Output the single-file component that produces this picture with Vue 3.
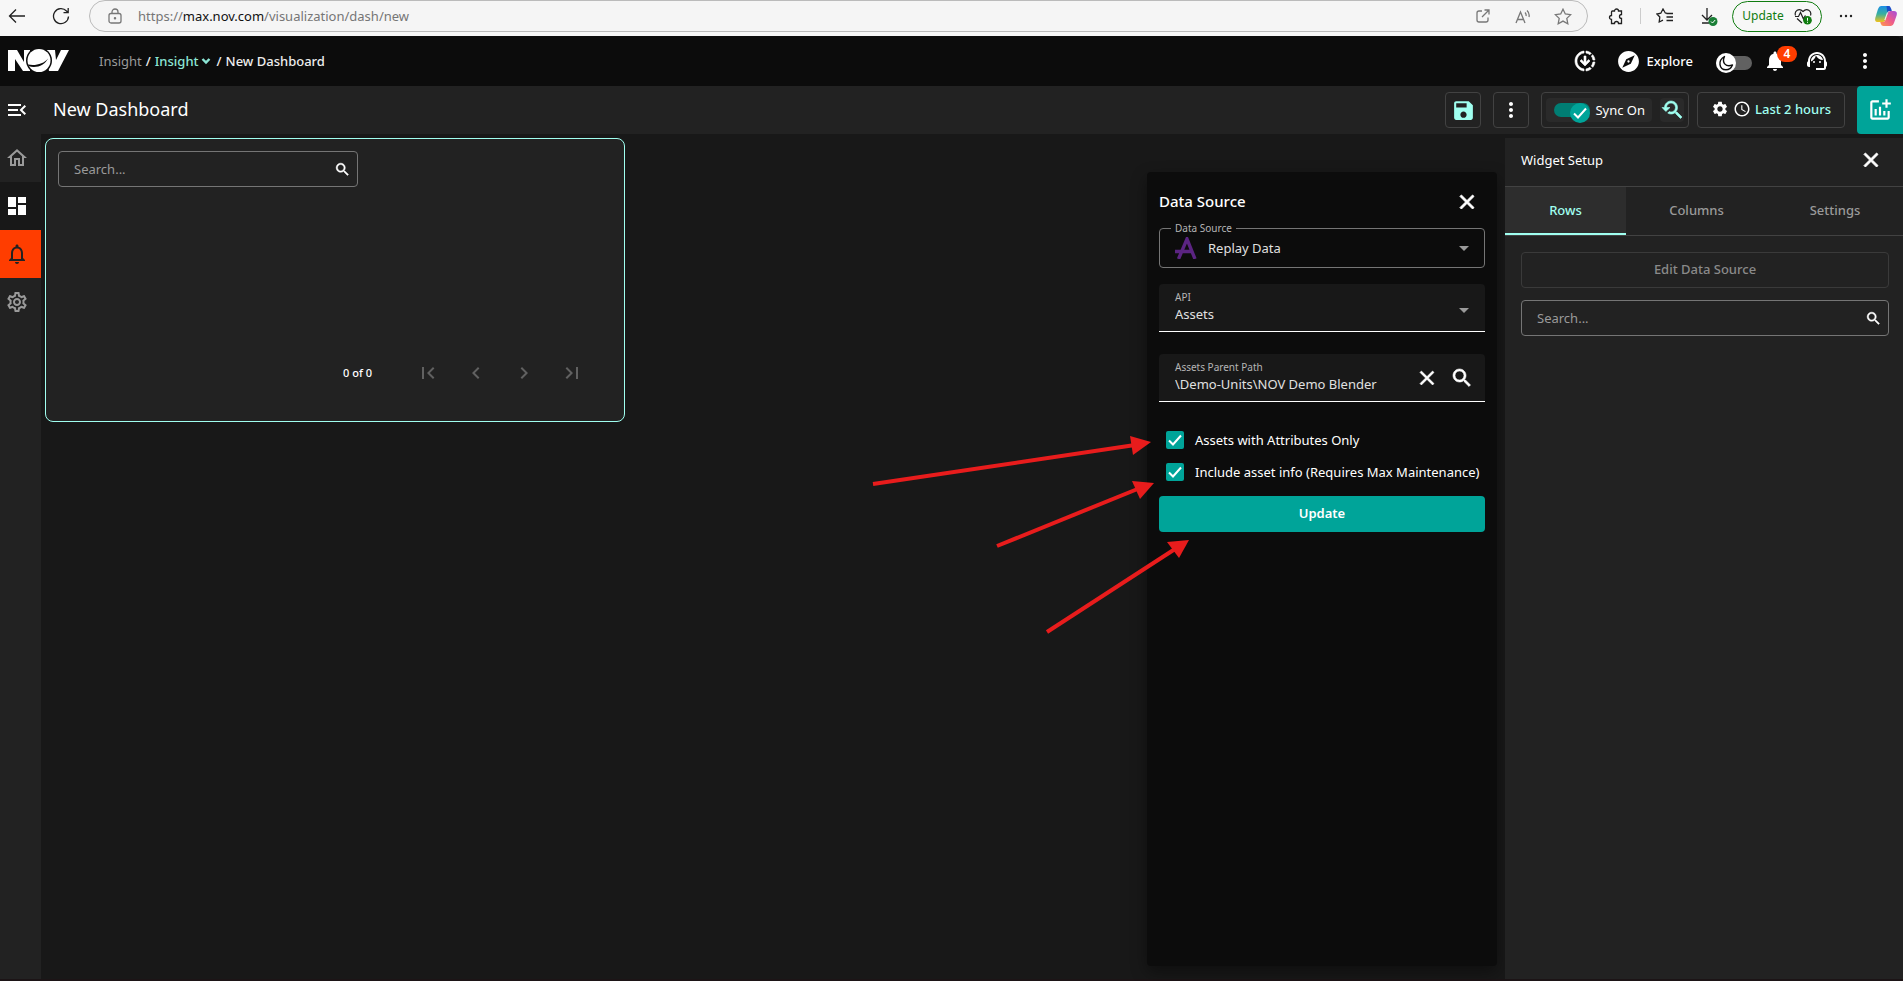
<script setup>
import { ref } from 'vue'

const paths = {
  menuOpen: 'M3 18h13v-2H3v2zM3 13h10v-2H3v2zm0-7v2h13V6H3zm18 9.59L17.42 12 21 8.41 19.59 7l-5 5 5 5L21 15.59z',
  home: 'M12 5.69l5 4.5V18h-2v-6H9v6H7v-7.81l5-4.5M12 3L2 12h3v8h6v-6h2v6h6v-8h3L12 3z',
  dashboard: 'M3 13h8V3H3v10zm0 8h8v-6H3v6zm10 0h8V11h-8v10zm0-18v6h8V3h-8z',
  bellOutline: 'M12 22c1.1 0 2-.9 2-2h-4c0 1.1.9 2 2 2zm6-6v-5c0-3.07-1.63-5.64-4.5-6.32V4c0-.83-.67-1.5-1.5-1.5s-1.5.67-1.5 1.5v.68C7.64 5.36 6 7.92 6 11v5l-2 2v1h16v-1l-2-2zm-2 1H8v-6c0-2.48 1.51-4.5 4-4.5s4 2.02 4 4.5v6z',
  bell: 'M12 22c1.1 0 2-.9 2-2h-4c0 1.1.89 2 2 2zm6-6v-5c0-3.07-1.64-5.64-4.5-6.32V4c0-.83-.67-1.5-1.5-1.5s-1.5.67-1.5 1.5v.68C7.63 5.36 6 7.92 6 11v5l-2 2v1h16v-1l-2-2z',
  gearOutline: 'M19.43 12.98c.04-.32.07-.64.07-.98 0-.34-.03-.66-.07-.98l2.11-1.65c.19-.15.24-.42.12-.64l-2-3.46c-.09-.16-.26-.25-.44-.25-.06 0-.12.01-.17.03l-2.49 1c-.52-.4-1.08-.73-1.69-.98l-.38-2.65C14.46 2.18 14.25 2 14 2h-4c-.25 0-.46.18-.49.42l-.38 2.65c-.61.25-1.17.59-1.69.98l-2.49-1c-.06-.02-.12-.03-.18-.03-.17 0-.34.09-.43.25l-2 3.46c-.13.22-.07.49.12.64l2.11 1.65c-.04.32-.07.65-.07.98 0 .33.03.66.07.98l-2.11 1.65c-.19.15-.24.42-.12.64l2 3.46c.09.16.26.25.44.25.06 0 .12-.01.17-.03l2.49-1c.52.4 1.08.73 1.69.98l.38 2.65c.03.24.24.42.49.42h4c.25 0 .46-.18.49-.42l.38-2.65c.61-.25 1.17-.59 1.69-.98l2.49 1c.06.02.12.03.18.03.17 0 .34-.09.43-.25l2-3.46c.12-.22.07-.49-.12-.64l-2.11-1.65zm-1.98-1.71c.04.31.05.52.05.73 0 .21-.02.43-.05.73l-.14 1.13.89.7 1.08.84-.7 1.21-1.27-.51-1.04-.42-.9.68c-.43.32-.84.56-1.25.73l-1.06.43-.16 1.13-.2 1.35h-1.4l-.19-1.35-.16-1.13-1.06-.43c-.43-.18-.83-.41-1.23-.71l-.91-.7-1.06.43-1.27.51-.7-1.21 1.08-.84.89-.7-.14-1.13c-.03-.31-.05-.54-.05-.74s.02-.43.05-.73l.14-1.13-.89-.7-1.08-.84.7-1.21 1.27.51 1.04.42.9-.68c.43-.32.84-.56 1.25-.73l1.06-.43.16-1.13.2-1.35h1.39l.19 1.35.16 1.13 1.06.43c.43.18.83.41 1.23.71l.91.7 1.06-.43 1.27-.51.7 1.21-1.07.85-.89.7.14 1.13zM12 8c-2.21 0-4 1.79-4 4s1.79 4 4 4 4-1.79 4-4-1.79-4-4-4zm0 6c-1.1 0-2-.9-2-2s.9-2 2-2 2 .9 2 2-.9 2-2 2z',
  gear: 'M19.14 12.94c.04-.3.06-.61.06-.94 0-.32-.02-.64-.07-.94l2.03-1.58c.18-.14.23-.41.12-.61l-1.92-3.32c-.12-.22-.37-.29-.59-.22l-2.39.96c-.5-.38-1.03-.7-1.62-.94l-.36-2.54c-.04-.24-.24-.41-.48-.41h-3.84c-.24 0-.43.17-.47.41l-.36 2.54c-.59.24-1.13.57-1.62.94l-2.39-.96c-.22-.08-.47 0-.59.22L2.74 8.87c-.12.21-.08.47.12.61l2.03 1.58c-.05.3-.09.63-.09.94s.02.64.07.94l-2.03 1.58c-.18.14-.23.41-.12.61l1.92 3.32c.12.22.37.29.59.22l2.39-.96c.5.38 1.03.7 1.62.94l.36 2.54c.05.24.24.41.48.41h3.84c.24 0 .44-.17.47-.41l.36-2.54c.59-.24 1.13-.56 1.62-.94l2.39.96c.22.08.47 0 .59-.22l1.92-3.32c.12-.22.07-.47-.12-.61l-2.01-1.58zM12 15.6c-1.98 0-3.6-1.62-3.6-3.6s1.62-3.6 3.6-3.6 3.6 1.62 3.6 3.6-1.62 3.6-3.6 3.6z',
  save: 'M17 3H5c-1.11 0-2 .9-2 2v14c0 1.1.89 2 2 2h14c1.1 0 2-.9 2-2V7l-4-4zm-5 16c-1.66 0-3-1.34-3-3s1.34-3 3-3 3 1.34 3 3-1.34 3-3 3zm3-10H5V5h10v4z',
  more: 'M12 8c1.1 0 2-.9 2-2s-.9-2-2-2-2 .9-2 2 .9 2 2 2zm0 2c-1.1 0-2 .9-2 2s.9 2 2 2 2-.9 2-2-.9-2-2-2zm0 6c-1.1 0-2 .9-2 2s.9 2 2 2 2-.9 2-2-.9-2-2-2z',
  search: 'M15.5 14h-.79l-.28-.27C15.41 12.59 16 11.11 16 9.5 16 5.91 13.09 3 9.5 3S3 5.91 3 9.5 5.91 16 9.5 16c1.61 0 3.09-.59 4.23-1.57l.27.28v.79l5 4.99L20.49 19l-4.99-5zm-6 0C7.01 14 5 11.99 5 9.5S7.01 5 9.5 5 14 7.01 14 9.5 11.99 14 9.5 14z',
  close: 'M19 6.41L17.59 5 12 10.59 6.41 5 5 6.41 10.59 12 5 17.59 6.41 19 12 13.41 17.59 19 19 17.59 13.41 12z',
  explore: 'M12 10.9c-.61 0-1.1.49-1.1 1.1s.49 1.1 1.1 1.1c.61 0 1.1-.49 1.1-1.1s-.49-1.1-1.1-1.1zM12 2C6.48 2 2 6.48 2 12s4.48 10 10 10 10-4.48 10-10S17.52 2 12 2zm2.19 12.19L6 18l3.81-8.19L18 6l-3.81 8.19z',
  support: 'M21 12.22C21 6.73 16.74 3 12 3c-4.69 0-9 3.65-9 9.28-.6.34-1 .98-1 1.72v2c0 1.1.9 2 2 2h1v-6.1c0-3.87 3.13-7 7-7s7 3.13 7 7V19h-8v2h8c1.1 0 2-.9 2-2v-1.22c.59-.31 1-.92 1-1.64v-2.3c0-.7-.41-1.31-1-1.62zM9 12a1 1 0 1 0 0 2 1 1 0 0 0 0-2zM15 12a1 1 0 1 0 0 2 1 1 0 0 0 0-2zM18 11.03C17.52 8.18 15.04 6 12.05 6c-3.03 0-6.29 2.51-6.03 6.45 2.47-1.01 4.33-3.21 4.86-5.89 1.31 2.63 4 4.44 7.12 4.47z',
  clock: 'M11.99 2C6.47 2 2 6.48 2 12s4.47 10 9.99 10C17.52 22 22 17.52 22 12S17.52 2 11.99 2zM12 20c-4.42 0-8-3.58-8-8s3.58-8 8-8 8 3.58 8 8-3.58 8-8 8zm.5-13H11v6l5.25 3.15.75-1.23-4.5-2.67z',
  downloading: 'M18.32 4.26C16.84 3.05 15.01 2.25 13 2.05v2.02c1.46.18 2.79.76 3.9 1.62l1.42-1.43zM19.93 11h2.02c-.2-2.01-1-3.84-2.21-5.32L18.31 7.1c.86 1.11 1.44 2.44 1.62 3.9zm-1.62 5.9l1.43 1.43c1.21-1.48 2.01-3.32 2.21-5.32h-2.02c-.18 1.45-.76 2.78-1.62 3.89zM13 19.93v2.02c2.01-.2 3.84-1 5.32-2.21l-1.43-1.43c-1.1.86-2.43 1.44-3.89 1.62zM15.59 10.59L13 13.17V7h-2v6.17l-2.59-2.59L7 12l5 5 5-5-1.41-1.41zM11 19.93v2.02c-5.05-.5-9-4.76-9-9.95s3.95-9.45 9-9.95v2.02C7.05 4.56 4 7.92 4 12s3.05 7.44 7 7.93z',
  first: 'M18.41 16.59L13.82 12l4.59-4.59L17 6l-6 6 6 6zM6 6h2v12H6z',
  prev: 'M15.41 7.41L14 6l-6 6 6 6 1.41-1.41L10.83 12z',
  next: 'M10 6L8.59 7.41 13.17 12l-4.58 4.59L10 18l6-6z',
  last: 'M5.59 7.41L10.18 12l-4.59 4.59L7 18l6-6-6-6zM16 6h2v12h-2z',
  addChart: 'M22 5v2h-3v3h-2V7h-3V5h3V2h2v3h3zm-3 14H5V5h6V3H5c-1.1 0-2 .9-2 2v14c0 1.1.9 2 2 2h14c1.1 0 2-.9 2-2v-6h-2v6zm-4-6v4h2v-4h-2zm-4 4h2V9h-2v8zm-2 0v-6H7v6h2z',
  resetZoom: 'M17.01 14h-.8l-.27-.27c.98-1.14 1.57-2.61 1.57-4.23 0-3.59-2.91-6.5-6.5-6.5s-6.5 3-6.5 6.5H2l3.84 4 4.16-4H6.51C6.51 7 8.53 5 11.01 5s4.5 2.01 4.5 4.5c0 2.48-2.02 4.5-4.5 4.5-.65 0-1.26-.14-1.82-.38L7.71 15.1c.97.57 2.09.9 3.3.9 1.61 0 3.08-.59 4.22-1.57l.27.27v.79l5.01 4.99L22 19l-4.99-5z',
  expand: 'M16.59 8.59L12 13.17 7.41 8.59 6 10l6 6 6-6z'
}

const nav = [
  { id: 'home', label: 'Home', icon: paths.home },
  { id: 'dashboards', label: 'Dashboards', icon: paths.dashboard },
  { id: 'alarms', label: 'Alarms', icon: paths.bellOutline },
  { id: 'settings', label: 'Settings', icon: paths.gearOutline }
]
const pager = [
  { label: 'First page', icon: paths.first },
  { label: 'Previous page', icon: paths.prev },
  { label: 'Next page', icon: paths.next },
  { label: 'Last page', icon: paths.last }
]
const tabs = ['Rows', 'Columns', 'Settings']
const activeTab = ref('Rows')
const widgetSearch = ref('')
const rowSearch = ref('')
const source = ref('Replay Data')
const api = ref('Assets')
const parentPath = ref('\\Demo-Units\\NOV Demo Blender')
const sync = ref(true)
const dark = ref(true)
const options = ref([
  { id: 'attrs', label: 'Assets with Attributes Only', on: true },
  { id: 'info', label: 'Include asset info (Requires Max Maintenance)', on: true }
])
</script>

<template>
  <div class="page">
    <div class="browser">
      <button class="bbtn" aria-label="Back">
        <svg width="18" height="16" viewBox="0 0 18 16" class="line"><path d="M17 8H1.500M8 1.500L1.500 8L8 14.500" /></svg>
      </button>
      <button class="bbtn" aria-label="Refresh">
        <svg width="18" height="18" viewBox="0 0 18 18" class="line"><path d="M16.500 9.500A7.500 7.500 0 1 1 14.500 4L16 5.500M16.200 1V5.700H11.500" /></svg>
      </button>
      <div class="address">
        <svg width="14" height="16" viewBox="0 0 14 16" class="line grey"><rect x="1" y="5.500" width="12" height="9.500" rx="2" /><path d="M4 5.500V4a3 3 0 0 1 6 0V5.500" /><circle cx="7" cy="10.300" r=".6" /></svg>
        <span class="url">https://<b>max.nov.com</b>/visualization/dash/new</span>
        <div class="address-tools">
          <button class="bbtn" aria-label="Open in app">
            <svg width="14" height="14" viewBox="0 0 14 14" class="line grey"><path d="M6 2H3a2 2 0 0 0-2 2v7a2 2 0 0 0 2 2h7a2 2 0 0 0 2-2V8.500M8.500 1H13V5.500M13 1L6 8" /></svg>
          </button>
          <button class="bbtn" aria-label="Read aloud">
            <svg width="16" height="15" viewBox="0 0 16 15" class="line grey"><path d="M1 14L5.500 3L10 14M2.600 10.500H8.500M10 3.500Q11.500 5 11 7M12 1.500Q14.800 4 14 8" /></svg>
          </button>
          <button class="bbtn" aria-label="Add to favorites">
            <svg width="18" height="17" viewBox="0 0 18 17" class="line grey"><path d="M9 1.200L11.300 6L16.700 6.700L12.800 10.400L13.800 15.700L9 13.100L4.200 15.700L5.200 10.400L1.300 6.700L6.700 6Z" /></svg>
          </button>
        </div>
      </div>
      <div class="browser-tools">
        <button class="bbtn" aria-label="Extensions">
          <svg width="16" height="17" viewBox="0 0 16 17" class="line"><path d="M4.500 3H6.500A2 2 0 0 1 10.500 3H13.500V6.500A2 2 0 0 0 13.500 10.500V15.500H10.500A2 2 0 0 0 6.500 15.500H3.500V11.500A2 2 0 1 1 3.500 7.500V4A1 1 0 0 1 4.500 3Z" /></svg>
        </button>
        <i class="rule"></i>
        <button class="bbtn" aria-label="Favorites">
          <svg width="18" height="16" viewBox="0 0 18 16" class="line"><path d="M11 5.300L9.300 5L7 1L4.800 5.200L1 6L3.800 9L3.200 14L7 12.200M10.500 5.500H17M10.500 9H17M10.500 12.500H17" /></svg>
        </button>
        <button class="bbtn" aria-label="Downloads">
          <svg width="18" height="19" viewBox="0 0 18 19"><path d="M7 1V13M2 8L7 13L12 8M2 16H9" fill="none" stroke="#222" stroke-width="1.300" /><circle cx="13" cy="14.500" r="4.500" fill="#1a7f37" /><path d="M11 14.500L12.500 16L15.200 13" fill="none" stroke="#fff" /></svg>
        </button>
        <button class="update-pill">Update
          <svg width="18" height="17" viewBox="0 0 18 17"><path d="M1.500 7.500C0 3 5 -.5 9 3.500C13 -.5 18 3 16.500 7.500M3 10.500L8 15M1 8.500H4.500L6.500 4.500L9.500 11L11 8H12" fill="none" stroke="#222" stroke-width="1.200" /><circle cx="13.500" cy="12.300" r="4.300" fill="#107c10" /><path d="M13.500 9.800V12.800M13.500 13.800V14.800" stroke="#fff" /></svg>
        </button>
        <button class="bbtn" aria-label="Browser menu">
          <svg width="14" height="4" viewBox="0 0 14 4" fill="#222"><circle cx="2" cy="2" r="1.200" /><circle cx="7" cy="2" r="1.200" /><circle cx="12" cy="2" r="1.200" /></svg>
        </button>
        <button class="bbtn" aria-label="Copilot">
          <svg width="22" height="20" viewBox="0 0 22 20">
            <defs>
              <linearGradient id="cpA" x1="0" y1="0" x2="0" y2="1"><stop offset="0" stop-color="#1b8fe6" /><stop offset=".5" stop-color="#38b0a0" /><stop offset="1" stop-color="#f2c21a" /></linearGradient>
              <linearGradient id="cpB" x1="1" y1="0" x2="0" y2="1"><stop offset="0" stop-color="#a44ddb" /><stop offset=".5" stop-color="#ee5a8a" /><stop offset="1" stop-color="#ff9a4a" /></linearGradient>
            </defs>
            <path d="M6 0H15L13.500 5L10.500 14Q9.800 16 8 16H3Q-.8 16 .4 11.500L3 3Q4 0 6 0Z" fill="url(#cpA)" />
            <path d="M11.500 0H13.500Q15.500 0 16.300 3L16.800 5H14Q12.800 5 12.300 6.500Z" fill="#1b4ec9" />
            <path d="M16 20H8.500Q6.500 20 5.700 17.500L5.200 16H8Q9.800 16 10.500 14L13 6.500Q13.600 5 15.500 5H19Q22.800 5 21.600 9.500L19 17Q18 20 16 20Z" fill="url(#cpB)" />
            <path d="M12 6.500H13L10.300 14H9.300Z" fill="#f7f7f7" />
          </svg>
        </button>
      </div>
    </div>

    <header class="topbar">
      <a href="#" class="logo" aria-label="NOV">
        <svg width="62" height="24" viewBox="0 0 62 24">
          <path d="M0 1H9L16 13V1H22V22H15L7 10V22H0Z" fill="#fff" />
          <path d="M37 1H47L48 11L53 1H61L50 22H41Z" fill="#fff" />
          <circle cx="31" cy="11.500" r="13" fill="#0c0c0c" />
          <circle cx="31" cy="11.500" r="11.500" fill="#fff" />
          <path d="M20 15.500C27 17 36 15 40 9.500C37 16 28 20 20.500 17Z" fill="#0c0c0c" />
        </svg>
      </a>
      <nav class="crumbs">
        <a href="#" class="dim">Insight</a><span>/</span>
        <button class="crumb-drop">Insight<svg width="14" height="14" viewBox="0 0 24 24"><path :d="paths.expand" stroke="currentColor" stroke-width="2" /></svg></button>
        <span>/</span><span>New Dashboard</span>
      </nav>
      <div class="top-tools">
        <button class="ibtn" aria-label="Downloads"><svg width="24" height="24" viewBox="0 0 24 24"><path :d="paths.downloading" stroke="currentColor" stroke-width=".6" /></svg></button>
        <button class="explore"><svg width="25" height="25" viewBox="0 0 24 24"><path :d="paths.explore" /></svg>Explore</button>
        <label class="switch theme">
          <input v-model="dark" type="checkbox" aria-label="Dark theme" />
          <span class="knob"><svg width="16" height="16" viewBox="0 0 16 16"><path d="M6.500 1.500C3.500 8 8 12.500 14.500 10C13 13.500 10.500 14.800 8 14.800C1 14.800 -.5 5.500 6.500 1.500Z" fill="#fff" stroke="#0c0c0c" stroke-width="1.400" stroke-linejoin="round" /></svg></span>
        </label>
        <button class="ibtn bell" aria-label="Notifications"><svg width="24" height="24" viewBox="0 0 24 24"><path :d="paths.bell" /></svg><span class="badge">4</span></button>
        <button class="ibtn" aria-label="Support"><svg width="24" height="24" viewBox="0 0 24 24"><path :d="paths.support" /></svg></button>
        <button class="ibtn" aria-label="More"><svg width="24" height="24" viewBox="0 0 24 24"><path :d="paths.more" /></svg></button>
      </div>
    </header>

    <div class="toolbar">
      <button class="ibtn" aria-label="Expand menu"><svg width="24" height="24" viewBox="0 0 24 24"><path :d="paths.menuOpen" /></svg></button>
      <h1>New Dashboard</h1>
      <div class="actions">
        <button class="obtn mint" aria-label="Save"><svg width="25" height="25" viewBox="0 0 24 24"><path :d="paths.save" /></svg></button>
        <button class="obtn" aria-label="Dashboard options"><svg width="24" height="24" viewBox="0 0 24 24"><path :d="paths.more" /></svg></button>
        <div class="group">
          <label class="switch sync">
            <input v-model="sync" type="checkbox" />
            <span class="knob"><svg width="16" height="16" viewBox="0 0 16 16"><path d="M2 8.500L6 12.500L14 3.500" fill="none" stroke="#fff" stroke-width="2" /></svg></span>
            Sync On
          </label>
          <button class="reset mint" aria-label="Reset zoom"><svg width="24" height="24" viewBox="0 0 24 24"><path :d="paths.resetZoom" stroke="currentColor" stroke-width=".6" /></svg></button>
        </div>
        <button class="range">
          <svg width="18" height="18" viewBox="0 0 24 24"><path :d="paths.gear" /></svg>
          <svg width="18" height="18" viewBox="0 0 24 24"><path :d="paths.clock" /></svg>
          <span>Last 2 hours</span>
        </button>
      </div>
      <button class="add" aria-label="Add widget"><svg width="26" height="26" viewBox="0 0 24 24"><path :d="paths.addChart" /></svg></button>
    </div>

    <div class="body">
      <nav class="side">
        <a v-for="n in nav" :key="n.id" href="#" :class="n.id" :aria-label="n.label"><svg width="24" height="24" viewBox="0 0 24 24"><path :d="n.icon" /></svg></a>
      </nav>

      <main class="canvas">
        <section class="widget">
          <label class="search">
            <input v-model="widgetSearch" type="text" placeholder="Search..." aria-label="Search widget" />
            <svg width="17" height="17" viewBox="0 0 24 24"><path :d="paths.search" stroke="currentColor" stroke-width=".6" /></svg>
          </label>
          <div class="pager">
            <span>0 of 0</span>
            <button v-for="p in pager" :key="p.label" disabled :aria-label="p.label"><svg width="24" height="24" viewBox="0 0 24 24"><path :d="p.icon" /></svg></button>
          </div>
        </section>
      </main>

      <section class="source">
        <div class="source-head">
          <h2>Data Source</h2>
          <button class="ibtn" aria-label="Close data source"><svg width="24" height="24" viewBox="0 0 24 24"><path :d="paths.close" stroke="currentColor" /></svg></button>
        </div>
        <div class="field outlined">
          <label for="src">Data Source</label>
          <svg class="mark" width="22" height="22" viewBox="0 0 22 22"><path d="M3.500 22L12 2L20 22M0 14.500H16" fill="none" stroke="#5b2482" stroke-width="3.400" /></svg>
          <select id="src" v-model="source"><option>Replay Data</option></select>
          <i class="caret"></i>
        </div>
        <div class="field filled">
          <label for="api">API</label>
          <select id="api" v-model="api"><option>Assets</option></select>
          <i class="caret"></i>
        </div>
        <div class="field filled">
          <label for="path">Assets Parent Path</label>
          <input id="path" v-model="parentPath" type="text" />
          <div class="field-tools">
            <button class="ibtn" aria-label="Clear path"><svg width="24" height="24" viewBox="0 0 24 24"><path :d="paths.close" stroke="currentColor" stroke-width=".6" /></svg></button>
            <button class="ibtn" aria-label="Find path"><svg width="24" height="24" viewBox="0 0 24 24"><path :d="paths.search" stroke="currentColor" stroke-width=".6" /></svg></button>
          </div>
        </div>
        <div class="checks">
          <label v-for="o in options" :key="o.id">
            <span class="tick">
              <input v-model="o.on" type="checkbox" />
              <svg width="18" height="18" viewBox="0 0 18 18"><path d="M3 9.500L7 13.500L15 4.500" fill="none" stroke="#fff" stroke-width="2" /></svg>
            </span>
            {{ o.label }}
          </label>
        </div>
        <button class="primary">Update</button>
      </section>

      <aside class="setup">
        <div class="setup-head">
          <h2>Widget Setup</h2>
          <button class="ibtn" aria-label="Close widget setup"><svg width="24" height="24" viewBox="0 0 24 24"><path :d="paths.close" stroke="currentColor" /></svg></button>
        </div>
        <div class="tabs" role="tablist">
          <button v-for="t in tabs" :key="t" role="tab" :aria-selected="t === activeTab" :class="{ active: t === activeTab }" @click="activeTab = t">{{ t }}</button>
        </div>
        <div class="setup-body">
          <button class="edit" disabled>Edit Data Source</button>
          <label class="search">
            <input v-model="rowSearch" type="text" placeholder="Search..." aria-label="Search rows" />
            <svg width="17" height="17" viewBox="0 0 24 24"><path :d="paths.search" stroke="currentColor" stroke-width=".6" /></svg>
          </label>
        </div>
      </aside>

      <svg class="arrows" width="330" height="210" viewBox="870 430 330 210">
        <g stroke="#e81c1c" stroke-width="4">
          <path d="M873 484L1135 445" /><path d="M997 546L1140 488" /><path d="M1047 632L1175 549" />
        </g>
        <g fill="#e81c1c">
          <path d="M1151 442L1130 436L1133 455Z" /><path d="M1154 483L1132 481L1140 499Z" /><path d="M1189 540L1167 542L1179 558Z" />
        </g>
      </svg>
    </div>
  </div>
</template>

<style>
body { margin: 0; background: #181818; }
</style>

<style scoped>
.page { min-height: 100vh; display: flex; flex-direction: column; font: 500 13px/20px "Noto Sans", "Open Sans", sans-serif; color: #fff; background: #181818; }
.page, .page *, .page *::before { box-sizing: border-box; }
button, input, select { font: inherit; color: inherit; background: none; border: 0; margin: 0; padding: 0; }
button { display: flex; align-items: center; justify-content: center; }
input, select { appearance: none; outline: 0; min-width: 0; opacity: 1; }
a { color: inherit; text-decoration: none; }
h1, h2 { margin: 0; }
svg { display: block; flex: none; }
.ibtn svg, .obtn svg, .side svg, .add svg, .range svg, .reset svg, .explore svg, .search svg, .pager svg, .crumb-drop svg { fill: currentColor; }
.ibtn { width: 24px; height: 24px; }
.mint { color: #a0fff0; }

.browser { height: 36px; display: flex; align-items: flex-start; background: #f7f7f7; color: #222; }
.bbtn { height: 32px; width: 44px; flex: none; }
.browser > .bbtn { width: 34px; }
.browser > .bbtn + .bbtn { margin-left: 10px; margin-right: 11px; }
.line { fill: none; stroke: #222; stroke-width: 1.3; }
.line.grey { stroke: #777; }
.address { flex: 1; height: 32px; display: flex; align-items: center; padding: 0 4px 0 18px; border: 1px solid #bbb; border-radius: 16px; background: #f5f5f5; }
.url { margin-left: 16px; color: #767676; font-weight: 400; font-size: 13px; }
.url b { font-weight: 400; color: #111; }
.address-tools { margin-left: auto; display: flex; }
.address-tools .bbtn { width: 40px; }
.browser-tools { display: flex; align-items: center; height: 32px; padding-left: 6px; }
.rule { width: 1px; height: 16px; margin: 0 2px; background: #ccc; }
.update-pill { width: 90px; height: 31px; margin: 0 2px 0 1px; gap: 10px; border: 1px solid #107c10; border-radius: 16px; color: #107c10; font-weight: 400; font-size: 12px; }
.browser-tools .bbtn:last-child { width: 35px; }

.topbar { height: 50px; display: flex; align-items: center; padding: 0 26px 0 8px; border-top-right-radius: 8px; background: #0c0c0c; }
.crumbs { display: flex; gap: 4px; margin-left: 29px; color: #eee; }
.dim { color: #9a9a9a; font-weight: 400; }
.crumb-drop { color: #8ce6d6; }
.top-tools { margin-left: auto; display: flex; align-items: center; }
.explore { margin-left: 19px; gap: 5px; }
.switch { display: flex; align-items: center; position: relative; }
.switch input { border-radius: 8px; }
.knob { position: absolute; display: grid; place-items: center; width: 20px; height: 20px; border-radius: 10px; background: #fff; }
.theme { margin: 4px 11px 0 23px; }
.theme input { width: 36px; height: 14px; background: #616161; }
.theme .knob { left: 0; }
.bell { position: relative; margin-right: 18px; }
.bell + .ibtn { margin-right: 24px; }
.badge { position: absolute; left: 14px; top: -3px; width: 20px; height: 16px; border-radius: 8px; background: #ff3d00; font: 600 12px/16px "Noto Sans", sans-serif; text-align: center; }

.toolbar { height: 48px; display: flex; align-items: center; background: #222; padding-left: 5px; }
.toolbar h1 { margin-left: 24px; padding-bottom: 2px; font-size: 18px; line-height: 24px; font-weight: 400; }
.actions { margin-left: auto; display: flex; gap: 12px; }
.obtn { width: 36px; height: 36px; border: 1px solid #424242; border-radius: 4px; }
.group { display: flex; align-items: center; gap: 8px; height: 36px; padding: 0 4px; border: 1px solid #424242; border-radius: 4px; }
.sync { height: 24px; padding: 0 7px 0 8px; gap: 5px; border-radius: 4px; background: #2a2a2a; font-weight: 400; }
.sync input { width: 36px; height: 14px; background: #007d73; }
.sync .knob { left: 24px; top: 5px; background: #00a499; }
.reset { width: 24px; height: 24px; border-radius: 4px; background: #2a2a2a; }
.range { width: 148px; height: 36px; margin-left: -4px; padding-bottom: 2px; gap: 4px; border: 1px solid #424242; border-radius: 4px; }
.range span { color: #a0fff0; }
.add { width: 46px; height: 48px; margin-left: 12px; border-radius: 4px 0 0 4px; background: #00a499; }

.body { flex: 1; display: flex; position: relative; border-bottom: 2px solid #1c1416; }
.side { width: 41px; background: #222; color: #9a9a9a; }
.side a { height: 48px; display: flex; align-items: center; padding-left: 5px; }
.side .dashboards { background: #181818; color: #fff; }
.side .alarms { background: #ff3d00; color: #222; }
.canvas { flex: 1; min-width: 0; padding: 4px; }
.widget { width: 580px; height: 284px; max-width: 100%; display: flex; flex-direction: column; padding: 12px; border: 1px solid #a0fff0; border-radius: 8px; background: #222; }
.search { display: flex; align-items: center; height: 36px; padding: 0 6px 0 15px; border: 1px solid #757575; border-radius: 4px; }
.search input { flex: 1; font-weight: 400; }
.search input::placeholder { color: #9a9a9a; opacity: 1; }
.widget .search { width: 300px; }
.pager { display: flex; align-items: center; margin: auto 16px 12px auto; font-size: 11px; }
.pager span { margin-right: 32px; }
.pager button { width: 48px; height: 48px; color: #616161; }

.source { width: 350px; margin: 38px 8px 13px 0; padding: 18px 12px; border-radius: 4px; background: #0c0c0c; box-shadow: 0 6px 16px rgba(0, 0, 0, .4); font-weight: 400; }
.source-head, .setup-head { display: flex; align-items: center; justify-content: space-between; }
.source-head { height: 24px; padding-right: 6px; }
.source-head h2 { padding-bottom: 2px; font-size: 15px; line-height: 22px; font-weight: 500; }
.field { position: relative; display: flex; color: #e0e0e0; }
.field label { color: #b5b5b5; font-size: 10px; line-height: 14px; }
.field select, .field input { width: 100%; height: 20px; }
.outlined { height: 40px; margin-top: 14px; align-items: center; gap: 11px; padding: 0 15px; border: 1px solid #757575; border-radius: 4px; }
.outlined label { position: absolute; left: 11px; top: -8px; padding: 0 4px; background: #0c0c0c; }
.filled { height: 48px; margin-top: 16px; flex-direction: column; padding: 6px 16px 0; border-bottom: 1px solid #fff; border-radius: 4px 4px 0 0; background: #181818; }
.filled + .filled { margin-top: 22px; }
.filled input { width: 220px; }
.caret { position: absolute; right: 15px; top: 17px; border: 5px solid transparent; border-top-color: #9a9a9a; border-bottom: 0; }
.filled .caret { right: 16px; top: 24px; }
.field-tools { position: absolute; right: 11px; top: 12px; display: flex; gap: 11px; color: #fff; }
.checks { display: flex; flex-direction: column; gap: 12px; margin: 28px 0 14px 7px; color: #fff; }
.checks label { display: flex; align-items: center; gap: 11px; white-space: nowrap; }
.tick { display: grid; }
.tick > * { grid-area: 1 / 1; }
.tick input { width: 18px; height: 18px; border-radius: 2px; background: #00a499; }
.tick svg { pointer-events: none; }
.primary { width: 100%; height: 36px; padding-bottom: 2px; border-radius: 4px; background: #00a499; font-weight: 600; }

.setup { width: 398px; margin-top: 4px; background: #222; }
.setup-head { height: 49px; padding: 0 20px 4px 16px; border-bottom: 1px solid #424242; }
.setup-head h2 { font-size: 13px; font-weight: 400; }
.tabs { display: grid; grid-template-columns: 121fr 141fr 136fr; height: 49px; border-bottom: 1px solid #424242; }
.tabs button { color: #9a9a9a; border-bottom: 2px solid transparent; }
.tabs .active { background: #2d2d2d; color: #a0fff0; border-color: #a0fff0; }
.setup-body { display: flex; flex-direction: column; gap: 12px; padding: 16px 14px 16px 16px; }
.edit { height: 36px; padding-bottom: 2px; border: 1px solid #3a3a3a; border-radius: 4px; color: #8a8a8a; }

.arrows { position: absolute; top: 296px; right: 703px; pointer-events: none; }
</style>
